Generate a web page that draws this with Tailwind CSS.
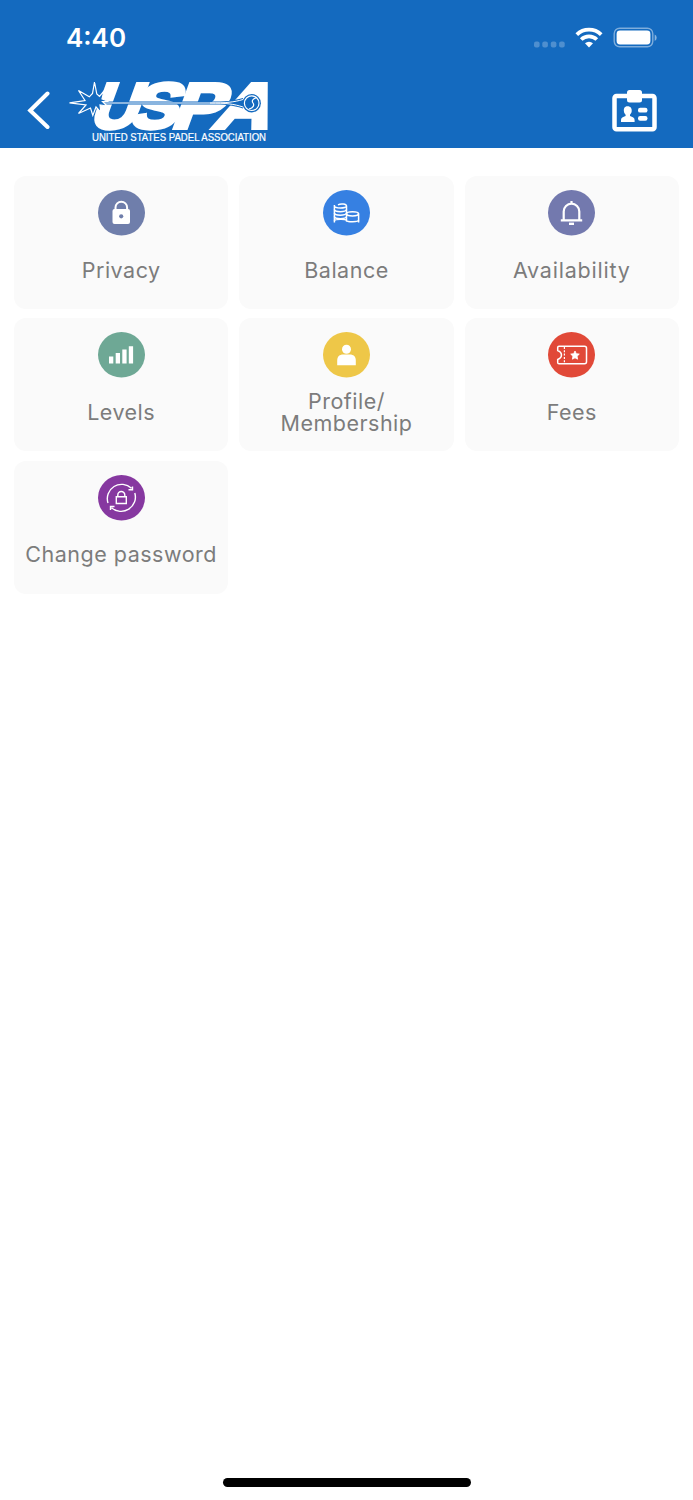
<!DOCTYPE html>
<html lang="en">
<head>
  <meta charset="UTF-8">
  <meta name="viewport" content="width=device-width, initial-scale=1.0">
  <title>Settings</title>
  <script src="https://cdn.jsdelivr.net/npm/@tailwindcss/browser@4"></script>
</head>
<body class="bg-white min-h-screen flex flex-col font-['Inter',sans-serif]">
  <header class="bg-[#146abf] h-[147.5px] text-white">
    <!-- Status bar -->
    <div class="h-[76px] flex items-center justify-between pl-[66px] pr-[36px]">
      <span class="text-[26px] font-semibold leading-none">4:40</span>
      <svg class="w-[124px] h-6" viewBox="0 0 124 24" fill="none">
        <g fill="#fff" fill-opacity=".25">
          <rect x="1" y="15.5" width="5.6" height="6" rx="2"/>
          <rect x="9.3" y="15.5" width="5.6" height="6" rx="2"/>
          <rect x="17.8" y="15.5" width="5.6" height="6" rx="2"/>
          <rect x="26.1" y="15.5" width="5.6" height="6" rx="2"/>
        </g>
        <g stroke="#fff" stroke-width="3.8">
          <path d="M43.8 8.6a17.5 17.5 0 0 1 24.4 0"/>
          <path d="M48.2 13.5a11.3 11.3 0 0 1 15.6 0"/>
        </g>
        <path d="M52 17.2a6 6 0 0 1 8 0l-4 4.4z" fill="#fff"/>
        <rect x="81.2" y="2.2" width="38.6" height="18.6" rx="5.5" stroke="#fff" stroke-opacity=".45" stroke-width="1.4"/>
        <rect x="83.6" y="4.6" width="33.8" height="13.8" rx="3.4" fill="#fff"/>
        <path d="M121.7 8.5q2 1 2 3.2t-2 3.2z" fill="#fff" fill-opacity=".5"/>
      </svg>
    </div>
    <!-- Navigation bar -->
    <div class="h-[70px] flex items-center pl-[26px] pr-[36px]">
      <svg class="w-6 h-10" viewBox="0 0 24 40" fill="none" stroke="#fff" stroke-width="4" stroke-linecap="round">
        <path d="M21.5 2.5 4.2 19.5l17.3 16.5"/>
      </svg>
      <svg class="ml-[18px] w-[206px] h-[68px] overflow-visible" viewBox="68 77 206 68" fill="none">
        <g fill="#fff" stroke="#fff" stroke-width="4" font-family="Liberation Sans" font-weight="700" font-size="64">
          <g transform="translate(92 127.8) skewX(-20)">
            <text x="-4" y="0" textLength="47" lengthAdjust="spacingAndGlyphs">U</text>
            <text x="36" y="0" textLength="47" lengthAdjust="spacingAndGlyphs">S</text>
            <text x="78" y="0" textLength="50" lengthAdjust="spacingAndGlyphs">P</text>
          </g>
          <g transform="translate(92 127.8) skewX(-24)">
            <text x="119" y="0" textLength="56" lengthAdjust="spacingAndGlyphs">A</text>
          </g>
        </g>
        <!-- Swoosh, ball and spark -->
        <path d="M98 101.5h112c16 0 22-.5 33-3.500v10.500c-11-3.500-17-4-33-4H98z" fill="#146abf"/>
        <path d="M98 103h112c16 0 24-.8 33-3.500M210 103c16 0 24 1 33 4" stroke="#fff" stroke-width="1"/>
        <circle cx="251.7" cy="103.2" r="9.2" fill="#146abf"/>
        <circle cx="251.7" cy="103.2" r="7.3" stroke="#fff" stroke-width="1.2"/>
        <path d="M256.500 98c-4 .5-5 3-3.500 5s.5 5-4 6" stroke="#fff" stroke-width="1.2"/>
        <path d="m69.5 102.8 15.5-2.300-6.500-10 10.800 6.300 3.200-3.300 2-11.500 2.300 12 2.700 2.500 4.500-5.500-2 7.800 6.500 2.700h-6l4.500 4.500-7-1 1 7.500-5-5.500-3.200 8.500-2.300-7.500-12 5.500 7.500-8.500z" fill="#146abf" stroke="#fff" stroke-width="1.2"/>
        <text x="92" y="140.700" fill="#fff" font-family="Liberation Sans" font-size="10" textLength="174" lengthAdjust="spacingAndGlyphs" stroke="#fff" stroke-width=".2">UNITED STATES PADEL ASSOCIATION</text>
      </svg>
      <svg class="ml-auto w-[45px] h-[42px]" viewBox="0 0 45 42">
        <rect x="2.5" y="6" width="40" height="33.2" rx="2" fill="none" stroke="#fff" stroke-width="4.5"/>
        <rect x="15" y="0" width="15" height="12.5" rx="2.5" fill="#fff"/>
        <path d="M15.500 16.200c3.200 0 4.500 2.300 4.200 5-.2 1.700-1 2.700-1.700 3.500v1.400c2.600.8 4.600 1.800 4.600 4v2H9v-2c0-2.200 2-3.200 4.600-4v-1.400c-.8-.8-1.500-1.800-1.700-3.500-.3-2.700.6-5 3.600-5z" fill="#fff"/>
        <rect x="26" y="17.8" width="9.5" height="4.8" rx="2.2" fill="#fff"/>
        <rect x="26" y="26" width="9.5" height="4.8" rx="2.2" fill="#fff"/>
      </svg>
    </div>
  </header>

  <main class="grow px-3.5 pt-[28.5px]">
    <div class="grid grid-cols-3 gap-x-[11px] gap-y-[9.3px] text-[21.5px] leading-[22px] tracking-[0.5px] text-[#7c7c7c] text-center">
      <div class="h-[133px] rounded-xl bg-[#fafafa] pt-3.5 pb-[6px] flex flex-col items-center">
        <svg class="w-[47px] h-[46px] shrink-0" viewBox="0 0 47 46">
          <ellipse cx="23.5" cy="22.8" rx="23.5" ry="22.8" fill="#6f7eab"/>
          <path d="M17.500 20v-2.500a5.800 5.800 0 0 1 11.600 0V20" fill="none" stroke="#fff" stroke-width="2"/>
          <rect x="14.5" y="19" width="17.5" height="15" rx="2" fill="#fff"/>
          <circle cx="23.2" cy="26.3" r="2.1" fill="#6f7eab"/>
        </svg>
        <div class="grow flex items-center">Privacy</div>
      </div>
      <div class="h-[133px] rounded-xl bg-[#fafafa] pt-3.5 pb-[6px] flex flex-col items-center">
        <svg class="w-[47px] h-[46px] shrink-0" viewBox="0 0 47 46" fill="none">
          <ellipse cx="23.5" cy="22.8" rx="23.5" ry="22.8" fill="#3680e2"/>
          <g stroke="#fff" stroke-width="1.5">
            <path d="M11.400 15v17.500M23.500 16v15.500M35.600 23.500v9M15 14.800c3-1.500 8.500-.8 8.500 1.200 0 2.700-12.100 2.700-12.100-.3"/>
            <path d="M11.400 19.500c0 2.900 12.100 2.900 12.100 0M11.400 23c0 2.900 12.100 2.900 12.100 0M11.400 26.500c0 2.900 12.100 2.900 12.100 0M11.400 31c0-2.200 12.100-2.200 12.100-.5s12.100 1.700 12.100-.5"/>
            <ellipse cx="29.5" cy="23.8" rx="6" ry="2.1"/>
          </g>
        </svg>
        <div class="grow flex items-center">Balance</div>
      </div>
      <div class="h-[133px] rounded-xl bg-[#fafafa] pt-3.5 pb-[6px] flex flex-col items-center">
        <svg class="w-[47px] h-[46px] shrink-0" viewBox="0 0 47 46" fill="none">
          <ellipse cx="23.5" cy="22.8" rx="23.5" ry="22.8" fill="#7379ae"/>
          <path d="M15.700 30v-8.500a7.800 7.800 0 0 1 15.600 0V30M12.800 30.300h21.400M23.500 11v3" stroke="#fff" stroke-width="2.2"/>
          <path d="M21 33.800h5" stroke="#fff" stroke-width="2.4"/>
        </svg>
        <div class="grow flex items-center tracking-[0.8px]">Availability</div>
      </div>
      <div class="h-[133px] rounded-xl bg-[#fafafa] pt-3.5 pb-[6px] flex flex-col items-center">
        <svg class="w-[47px] h-[46px] shrink-0" viewBox="0 0 47 46">
          <ellipse cx="23.5" cy="22.8" rx="23.5" ry="22.8" fill="#6ea895"/>
          <path d="M11 24.500h4.300v7H11zM17.700 21H22v10.500h-4.300zM24.300 17.500h4.300v14h-4.300zM30.800 14.200h4.300v17.300h-4.300z" fill="#fff"/>
        </svg>
        <div class="grow flex items-center">Levels</div>
      </div>
      <div class="h-[133px] rounded-xl bg-[#fafafa] pt-3.5 pb-[6px] flex flex-col items-center">
        <svg class="w-[47px] h-[46px] shrink-0" viewBox="0 0 47 46">
          <ellipse cx="23.5" cy="22.8" rx="23.5" ry="22.8" fill="#eec748"/>
          <circle cx="23.5" cy="17.2" r="4.5" fill="#fff"/>
          <path d="M14.200 33.200v-4.700c0-4 2.300-6 6-6h6.600c3.700 0 6 2 6 6v4.700z" fill="#fff"/>
        </svg>
        <div class="grow flex items-center">Profile/<br>Membership</div>
      </div>
      <div class="h-[133px] rounded-xl bg-[#fafafa] pt-3.5 pb-[6px] flex flex-col items-center">
        <svg class="w-[47px] h-[46px] shrink-0" viewBox="0 0 47 46" fill="none">
          <ellipse cx="23.5" cy="22.8" rx="23.5" ry="22.8" fill="#e14938"/>
          <path d="M11 14.200h25.500a2 2 0 0 1 2 2v13.600a2 2 0 0 1-2 2H11q-1.300 0-1.300-1.300V27.500c5-2 5-7 0-9v-3q0-1.300 1.300-1.300z" stroke="#fff" stroke-width="1.5"/>
          <path d="M16.400 15v17" stroke="#fff" stroke-width="1.2" stroke-dasharray="2 1.3"/>
          <path d="m27 19 1.300 2.700 3 .4-2.200 2.100.5 3-2.600-1.400-2.600 1.400.5-3-2.200-2.100 3-.4z" fill="#fff" stroke="#fff" stroke-width=".8"/>
        </svg>
        <div class="grow flex items-center">Fees</div>
      </div>
      <div class="h-[133px] rounded-xl bg-[#fafafa] pt-3.5 pb-[6px] flex flex-col items-center">
        <svg class="w-[47px] h-[46px] shrink-0" viewBox="0 0 47 46" fill="none">
          <ellipse cx="23.5" cy="22.8" rx="23.5" ry="22.8" fill="#8638a0"/>
          <g stroke="#fff" stroke-width="1.4">
            <path d="M10 28A14.300 14.300 0 0 1 33.500 13.300M36.800 18A14.300 14.300 0 0 1 13.500 32.700M34.500 11.500v3.300h-4M12.500 35v-3.500h4"/>
            <path d="M18.300 21.700h10v6.800h-10z"/>
            <path d="M19.800 21.700V20a3.500 3.500 0 0 1 7 0v1.700"/>
          </g>
        </svg>
        <div class="grow flex items-center whitespace-nowrap">Change password</div>
      </div>
    </div>
  </main>

  <footer class="flex justify-center pb-[13.5px]">
    <div class="w-[248px] h-[8.5px] rounded-full bg-black"></div>
  </footer>
</body>
</html>
